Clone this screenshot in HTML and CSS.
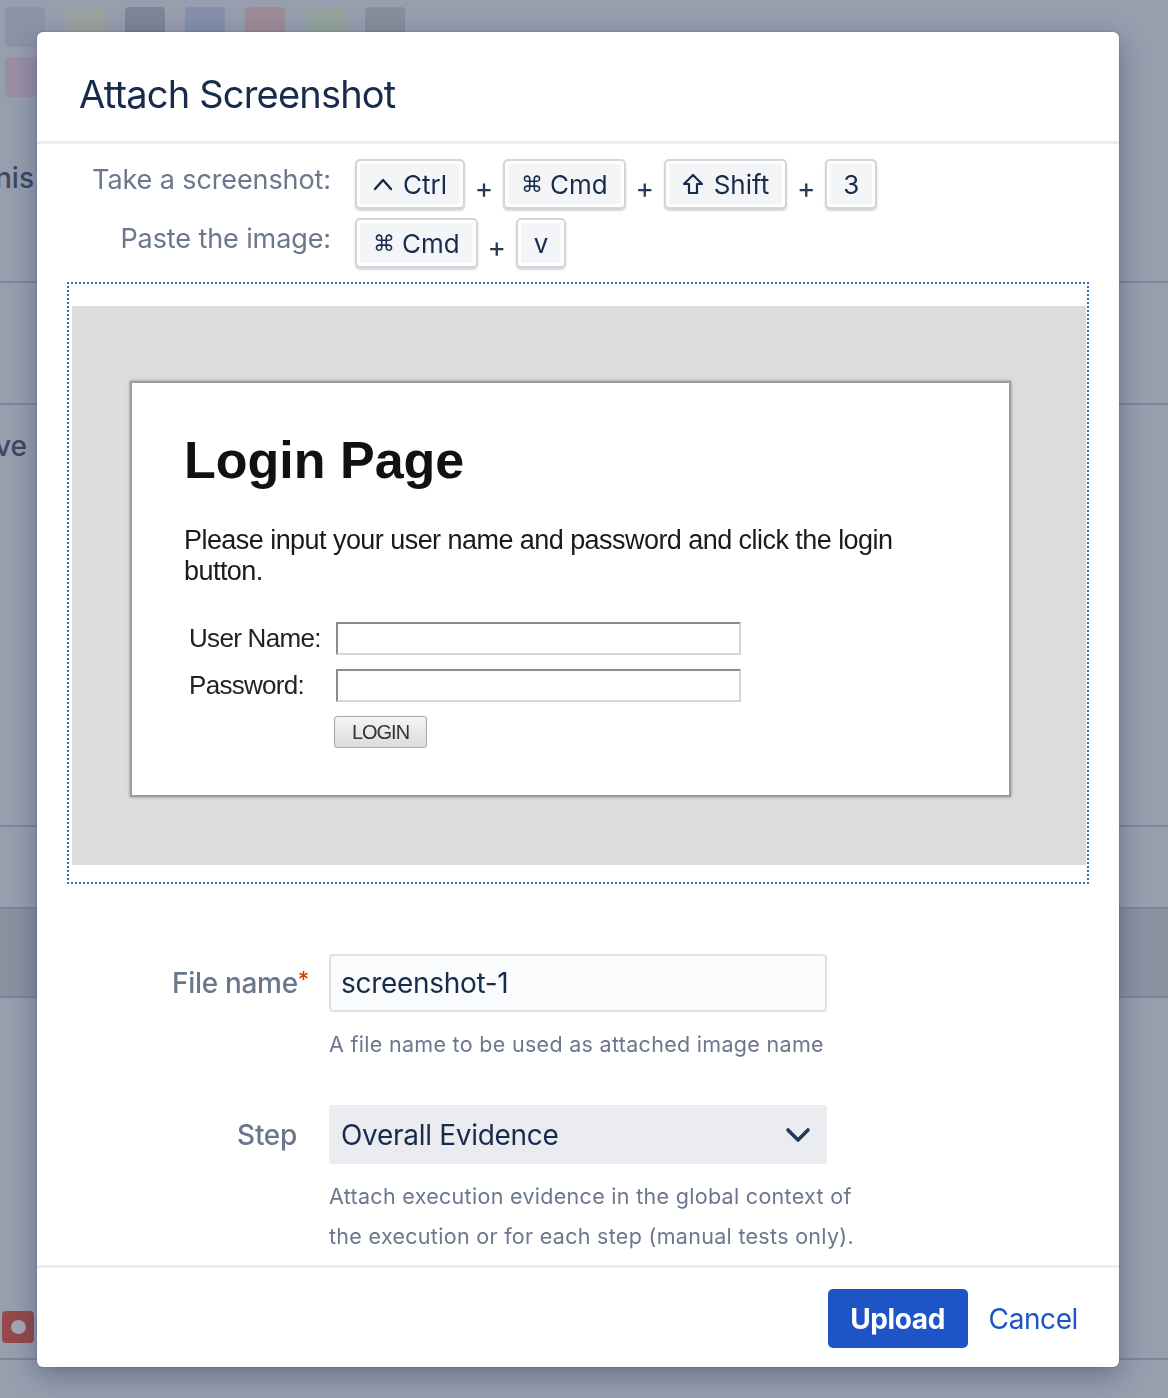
FILE: index.html
```html
<!DOCTYPE html>
<html lang="en">
<head>
  <meta charset="UTF-8" />
  <title>Attach Screenshot</title>
  <link rel="stylesheet" href="styles.css">
</head>
<body>
  <!-- page behind the dialog -->
  <div class="page">
    <div class="tiles">
      <div class="tile-row">
        <span class="tile t1"></span>
        <span class="tile t2"></span>
        <span class="tile t3"></span>
        <span class="tile t4"></span>
        <span class="tile t5"></span>
        <span class="tile t6"></span>
        <span class="tile t7"></span>
      </div>
      <div class="tile-row">
        <span class="tile t8"></span>
      </div>
    </div>
    <div class="row row-a"><span class="row-text">nis</span></div>
    <div class="row row-b"></div>
    <div class="row row-c"><span class="row-text">ve</span></div>
    <div class="row row-d"></div>
    <div class="row row-e"></div>
    <div class="row row-f"><span class="status-icon"></span></div>
  </div>

  <!-- dialog -->
  <div class="dialog-layer">
    <section class="modal">
      <header class="modal-header">
        <h2>Attach Screenshot</h2>
      </header>

      <div class="modal-body">
        <div class="shortcuts">
          <span class="shortcut-label">Take a screenshot:</span>
          <span class="keys">
            <kbd><svg class="sym" width="20" height="14" viewBox="0 0 20 14"><path d="M2 12 L10 3 L18 12" fill="none" stroke="#172b4d" stroke-width="2.4" stroke-linecap="round" stroke-linejoin="round"/></svg>Ctrl</kbd>
            <span class="plus">+</span>
            <kbd><span class="cmd">&#8984;</span>Cmd</kbd>
            <span class="plus">+</span>
            <kbd><svg class="sym" width="22" height="22" viewBox="0 0 22 22"><path d="M11 2 L20 11 H15 V20 H7 V11 H2 Z" fill="none" stroke="#172b4d" stroke-width="2.2" stroke-linejoin="round"/></svg>Shift</kbd>
            <span class="plus">+</span>
            <kbd>3</kbd>
          </span>
          <span class="shortcut-label">Paste the image:</span>
          <span class="keys">
            <kbd><span class="cmd">&#8984;</span>Cmd</kbd>
            <span class="plus">+</span>
            <kbd>v</kbd>
          </span>
        </div>

        <div class="dropzone">
          <div class="preview">
            <div class="login-box">
              <h1>Login Page</h1>
              <p>Please input your user name and password and click the login<br>button.</p>
              <div class="login-form">
                <span class="login-label">User Name:</span>
                <span class="fake-input"></span>
                <span class="login-label">Password:</span>
                <span class="fake-input"></span>
                <span></span>
                <span class="fake-btn">LOGIN</span>
              </div>
            </div>
          </div>
        </div>

        <div class="form">
          <label class="field-label" for="fileName">File name<span class="req">*</span></label>
          <input id="fileName" class="text-input" type="text" value="screenshot-1">
          <span></span>
          <p class="help">A file name to be used as attached image name</p>

          <label class="field-label step-label">Step</label>
          <div class="select">
            <span>Overall Evidence</span>
            <svg width="26" height="16" viewBox="0 0 26 16"><path d="M3 3 L13 13 L23 3" fill="none" stroke="#253858" stroke-width="3.6" stroke-linecap="round" stroke-linejoin="round"/></svg>
          </div>
          <span></span>
          <p class="help help-wide">Attach execution evidence in the global context of the execution or for each step (manual tests only).</p>
        </div>
      </div>

      <footer class="modal-footer">
        <button class="btn-primary">Upload</button>
        <button class="btn-link">Cancel</button>
      </footer>
    </section>
  </div>
</body>
</html>
```

FILE: styles.css
```css
body {
  margin: 0;
  height: 1398px;
  overflow: hidden;
  background: #979eae;
  font-family: Inter, "Noto Sans", sans-serif;
}

/* === page behind the dialog === */
.tiles {
  padding: 7px 0 0 5px;
  display: flex;
  flex-direction: column;
  gap: 10px;
}
.tile-row {
  display: flex;
  gap: 20px;
}
.tile {
  width: 40px;
  height: 40px;
  border-radius: 4px;
}
.t1 { background: #8d94a6; }
.t2 { background: #9ca29f; }
.t3 { background: #7f8596; }
.t4 { background: #8490ad; }
.t5 { background: #9f8c98; }
.t6 { background: #94a29c; }
.t7 { background: #898e9d; }
.t8 { background: #9c8fa5; }

.row {
  border-bottom: 2px solid #7f8596;
  box-sizing: border-box;
}
.row-a { height: 186px; padding-top: 66px; }
.row-b { height: 122px; }
.row-c { height: 422px; padding-top: 26px; }
.row-d { height: 82px; }
.row-e { height: 89px; background: #8a91a1; }
.row-f { height: 362px; padding: 313px 0 0 2px; }
.row-text {
  display: block;
  margin-left: -5px;
  font-size: 28px;
  line-height: 30px;
  font-weight: 500;
  color: #3e4862;
}
.status-icon {
  display: flex;
  width: 32px;
  height: 32px;
  border-radius: 4px;
  background: #954a4b;
  align-items: center;
  justify-content: center;
}
.status-icon::after {
  content: "";
  width: 15px;
  height: 14px;
  border-radius: 50%;
  background: #a3a8b6;
}

/* === dialog === */
.dialog-layer {
  position: fixed;
  inset: 0;
  padding: 32px 0 0 37px;
}
.modal {
  width: 1082px;
  height: 1335px;
  background: #fff;
  border-radius: 6px;
  box-shadow: 0 8px 28px rgba(9, 30, 66, 0.35), 0 0 2px rgba(9, 30, 66, 0.3);
  display: flex;
  flex-direction: column;
  overflow: hidden;
}
.modal-header {
  height: 109px;
  border-bottom: 3px solid #ebecf0;
  padding-left: 42px;
  display: flex;
  align-items: flex-end;
}
.modal-header h2 {
  margin: 0 0 23px;
  font-size: 38px;
  font-weight: 400;
  letter-spacing: -0.8px;
  line-height: 48px;
  color: #172b4d;
}
.modal-body {
  flex: 1;
}

/* === keyboard shortcuts === */
.shortcuts {
  display: grid;
  grid-template-columns: 294px auto;
  column-gap: 24px;
  row-gap: 9px;
  align-items: center;
  margin-top: 15px;
}
.shortcut-label {
  text-align: right;
  font-size: 27px;
  color: #6b778c;
  letter-spacing: -0.1px;
  padding-bottom: 9px;
}
.keys {
  display: flex;
  align-items: center;
}
kbd {
  height: 50px;
  box-sizing: border-box;
  padding: 0 16px;
  display: flex;
  align-items: center;
  border: 2px solid #d3d5d9;
  border-radius: 5px;
  background: #f4f5f7;
  box-shadow: inset 0 0 0 3px #fff, 0 2px 2px rgba(9, 30, 66, 0.18);
  font-family: Inter, sans-serif;
  font-size: 26px;
  color: #172b4d;
}
.sym {
  margin-right: 10px;
}
.cmd {
  font-family: "DejaVu Sans", sans-serif;
  font-size: 22px;
  margin-right: 7px;
}
.plus {
  width: 38px;
  text-align: center;
  padding-top: 8px;
  font-size: 28px;
  color: #253858;
}

/* === drop area with the pasted image === */
.dropzone {
  margin: 14px 30px 0;
  height: 602px;
  box-sizing: border-box;
  border: 2px dotted #3c6ba6;
  padding: 22px 1px 17px 3px;
}
.preview {
  height: 559px;
  background: #dcdcdc;
  padding: 75px 0 0 58px;
  box-sizing: border-box;
}
.login-box {
  width: 881px;
  height: 416px;
  box-sizing: border-box;
  border: 2px solid #9c9c9c;
  box-shadow: 0 0 3px rgba(0, 0, 0, 0.35);
  background: #fff;
  padding: 51px 0 0 52px;
  font-family: "Liberation Sans", Arial, sans-serif;
  color: #111;
}
.login-box h1 {
  margin: 0;
  font-size: 52px;
  line-height: 52px;
  font-weight: 700;
}
.login-box p {
  margin: 39px 0 0;
  font-size: 27px;
  line-height: 31px;
  letter-spacing: -0.55px;
  color: #1a1a1a;
}
.login-form {
  display: grid;
  grid-template-columns: 147px 405px;
  row-gap: 14px;
  margin: 35px 0 0 5px;
  align-items: center;
}
.login-label {
  font-size: 26px;
  letter-spacing: -0.7px;
  color: #222;
}
.fake-input {
  height: 33px;
  box-sizing: border-box;
  border: 2px solid #d6d6d6;
  border-top-color: #8c8c8c;
  border-left-color: #8c8c8c;
}
.fake-btn {
  width: 93px;
  height: 32px;
  margin-left: -2px;
  box-sizing: border-box;
  border: 1px solid #a6a6a6;
  border-radius: 3px;
  background: linear-gradient(#f4f4f4, #dcdcdc);
  font-size: 20px;
  letter-spacing: -1px;
  line-height: 30px;
  text-align: center;
  color: #333;
}

/* === form fields === */
.form {
  display: grid;
  grid-template-columns: 260px 498px;
  column-gap: 32px;
  align-items: center;
  margin-top: 70px;
}
.field-label {
  text-align: right;
  font-size: 28px;
  font-weight: 500;
  color: #6b778c;
  letter-spacing: -0.3px;
}
.req {
  color: #de350b;
  font-size: 22px;
  margin-right: -12px;
  vertical-align: 6px;
}
.text-input {
  height: 58px;
  box-sizing: border-box;
  border: 2px solid #dfe1e6;
  border-radius: 4px;
  background: #fafbfc;
  padding: 0 10px;
  font-family: Inter, sans-serif;
  font-size: 28px;
  color: #172b4d;
  letter-spacing: -0.3px;
}
.help {
  margin: 12px 0 0;
  font-size: 21.5px;
  line-height: 40px;
  color: #6b778c;
  letter-spacing: 0.3px;
}
.step-label {
  margin-top: 41px;
}
.select {
  margin-top: 41px;
  height: 59px;
  border-radius: 4px;
  background: #ebecf0;
  display: flex;
  align-items: center;
  justify-content: space-between;
  padding: 0 16px 0 12px;
  font-size: 28px;
  color: #172b4d;
  letter-spacing: -0.3px;
}
.help-wide {
  width: 540px;
}

/* === footer === */
.modal-footer {
  border-top: 3px solid #ebecf0;
  padding: 21px 41px 19px;
  display: flex;
  justify-content: flex-end;
  align-items: center;
  gap: 21px;
}
.btn-primary {
  width: 140px;
  height: 59px;
  border: none;
  border-radius: 5px;
  background: #1e55c6;
  color: #fff;
  font-family: Inter, sans-serif;
  font-size: 28px;
  font-weight: 700;
  letter-spacing: -0.4px;
}
.btn-link {
  border: none;
  background: none;
  padding: 0;
  font-family: Inter, sans-serif;
  font-size: 28px;
  color: #1e55c6;
  letter-spacing: -0.4px;
}
```
